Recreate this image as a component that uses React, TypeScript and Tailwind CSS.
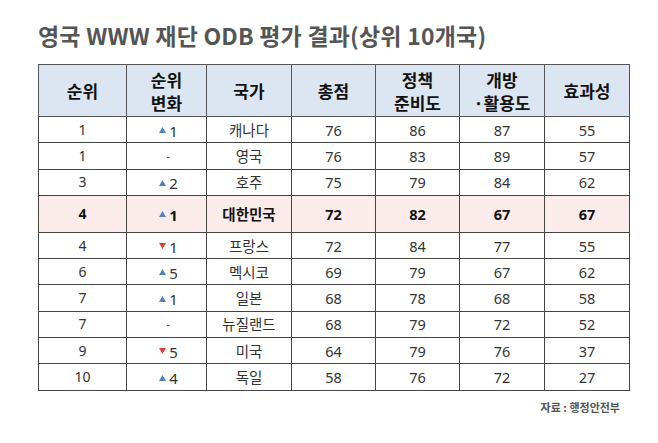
import React from "react";

type Row = {
  rank: string;
  dir: "up" | "down" | "none";
  change: string;
  country: string;
  total: string;
  policy: string;
  open: string;
  effect: string;
  hl?: boolean;
};

const rows: Row[] = [
  { rank: "1", dir: "up", change: "1", country: "캐나다", total: "76", policy: "86", open: "87", effect: "55" },
  { rank: "1", dir: "none", change: "-", country: "영국", total: "76", policy: "83", open: "89", effect: "57" },
  { rank: "3", dir: "up", change: "2", country: "호주", total: "75", policy: "79", open: "84", effect: "62" },
  { rank: "4", dir: "up", change: "1", country: "대한민국", total: "72", policy: "82", open: "67", effect: "67", hl: true },
  { rank: "4", dir: "down", change: "1", country: "프랑스", total: "72", policy: "84", open: "77", effect: "55" },
  { rank: "6", dir: "up", change: "5", country: "멕시코", total: "69", policy: "79", open: "67", effect: "62" },
  { rank: "7", dir: "up", change: "1", country: "일본", total: "68", policy: "78", open: "68", effect: "58" },
  { rank: "7", dir: "none", change: "-", country: "뉴질랜드", total: "68", policy: "79", open: "72", effect: "52" },
  { rank: "9", dir: "down", change: "5", country: "미국", total: "64", policy: "79", open: "76", effect: "37" },
  { rank: "10", dir: "up", change: "4", country: "독일", total: "58", policy: "76", open: "72", effect: "27" },
];

const headers = [
  { t: ["순위"], w: "w-[88px]" },
  { t: ["순위", "변화"], w: "w-[80px]" },
  { t: ["국가"], w: "w-[85px]" },
  { t: ["총점"], w: "w-[84px]" },
  { t: ["정책", "준비도"], w: "w-[84px]" },
  { t: ["개방", "·활용도"], w: "w-[85px]" },
  { t: ["효과성"], w: "w-[85px]" },
];

function Change({ dir, value }: { dir: Row["dir"]; value: string }) {
  if (dir === "none") {
    return <span className="text-[12px] text-[#555]">-</span>;
  }
  return (
    <span className="inline-flex items-center gap-[3px] align-middle">
      <svg width="7" height="6" viewBox="0 0 7 6" className="mt-[-1px]">
        {dir === "up" ? (
          <polygon points="3.5,0 7,6 0,6" fill="#4f81bd" />
        ) : (
          <polygon points="0,0 7,0 3.5,6" fill="#d9403a" />
        )}
      </svg>
      <span className="text-[15px] leading-[18px]">{value}</span>
    </span>
  );
}

export default function App() {
  const font = { fontFamily: '"Noto Sans", "Noto Sans CJK KR", sans-serif' };
  return (
    <div className="w-[658px] h-[443px] bg-white overflow-hidden" style={font}>
      <div
        className="pl-[38px] pt-[20px] text-[23px] font-bold text-[#555] leading-[30px] tracking-[0.2px]"
        style={{ fontFamily: '"Noto Sans CJK KR", sans-serif' }}
      >
        영국 WWW 재단 ODB 평가 결과(상위 10개국)
      </div>
      <div className="pl-[38px] pt-[14px]">
        <table className="border-collapse table-fixed w-[591px] text-[#333]">
          <thead>
            <tr className="h-[52px] bg-[#dce6f2]">
              {headers.map((h, i) => (
                <th
                  key={i}
                  className={`${h.w} border border-[#555] p-0 text-[17px] font-bold text-[#111] leading-[23px] text-center align-middle`}
                  style={{ fontFamily: '"Noto Sans CJK KR", sans-serif' }}
                >
                  {h.t.map((l, j) => (
                    <div key={j}>{l}</div>
                  ))}
                </th>
              ))}
            </tr>
          </thead>
          <tbody>
            {rows.map((r, i) => {
              const cell = `border border-[#444] p-0 text-center align-middle text-[14.5px] leading-[18px] ${
                r.hl ? "font-bold text-[#111]" : ""
              }`;
              return (
                <tr key={i} className={r.hl ? "h-[37px] bg-[#fbeceb]" : "h-[26.3px] bg-white"}>
                  <td className={`${cell} text-[14px]`}>{r.rank}</td>
                  <td className={`${cell} pl-[4px]`}>
                    <Change dir={r.dir} value={r.change} />
                  </td>
                  <td className={cell} style={{ fontFamily: '"Noto Sans CJK KR", sans-serif' }}>
                    {r.country}
                  </td>
                  <td className={cell}>{r.total}</td>
                  <td className={cell}>{r.policy}</td>
                  <td className={cell}>{r.open}</td>
                  <td className={cell}>{r.effect}</td>
                </tr>
              );
            })}
          </tbody>
        </table>
      </div>
      <div className="w-[620px] flex justify-end pt-[8px]">
        <span
          className="text-[11px] font-bold text-[#555]"
          style={{ fontFamily: '"Noto Sans CJK KR", sans-serif' }}
        >
          자료 : 행정안전부
        </span>
      </div>
    </div>
  );
}
